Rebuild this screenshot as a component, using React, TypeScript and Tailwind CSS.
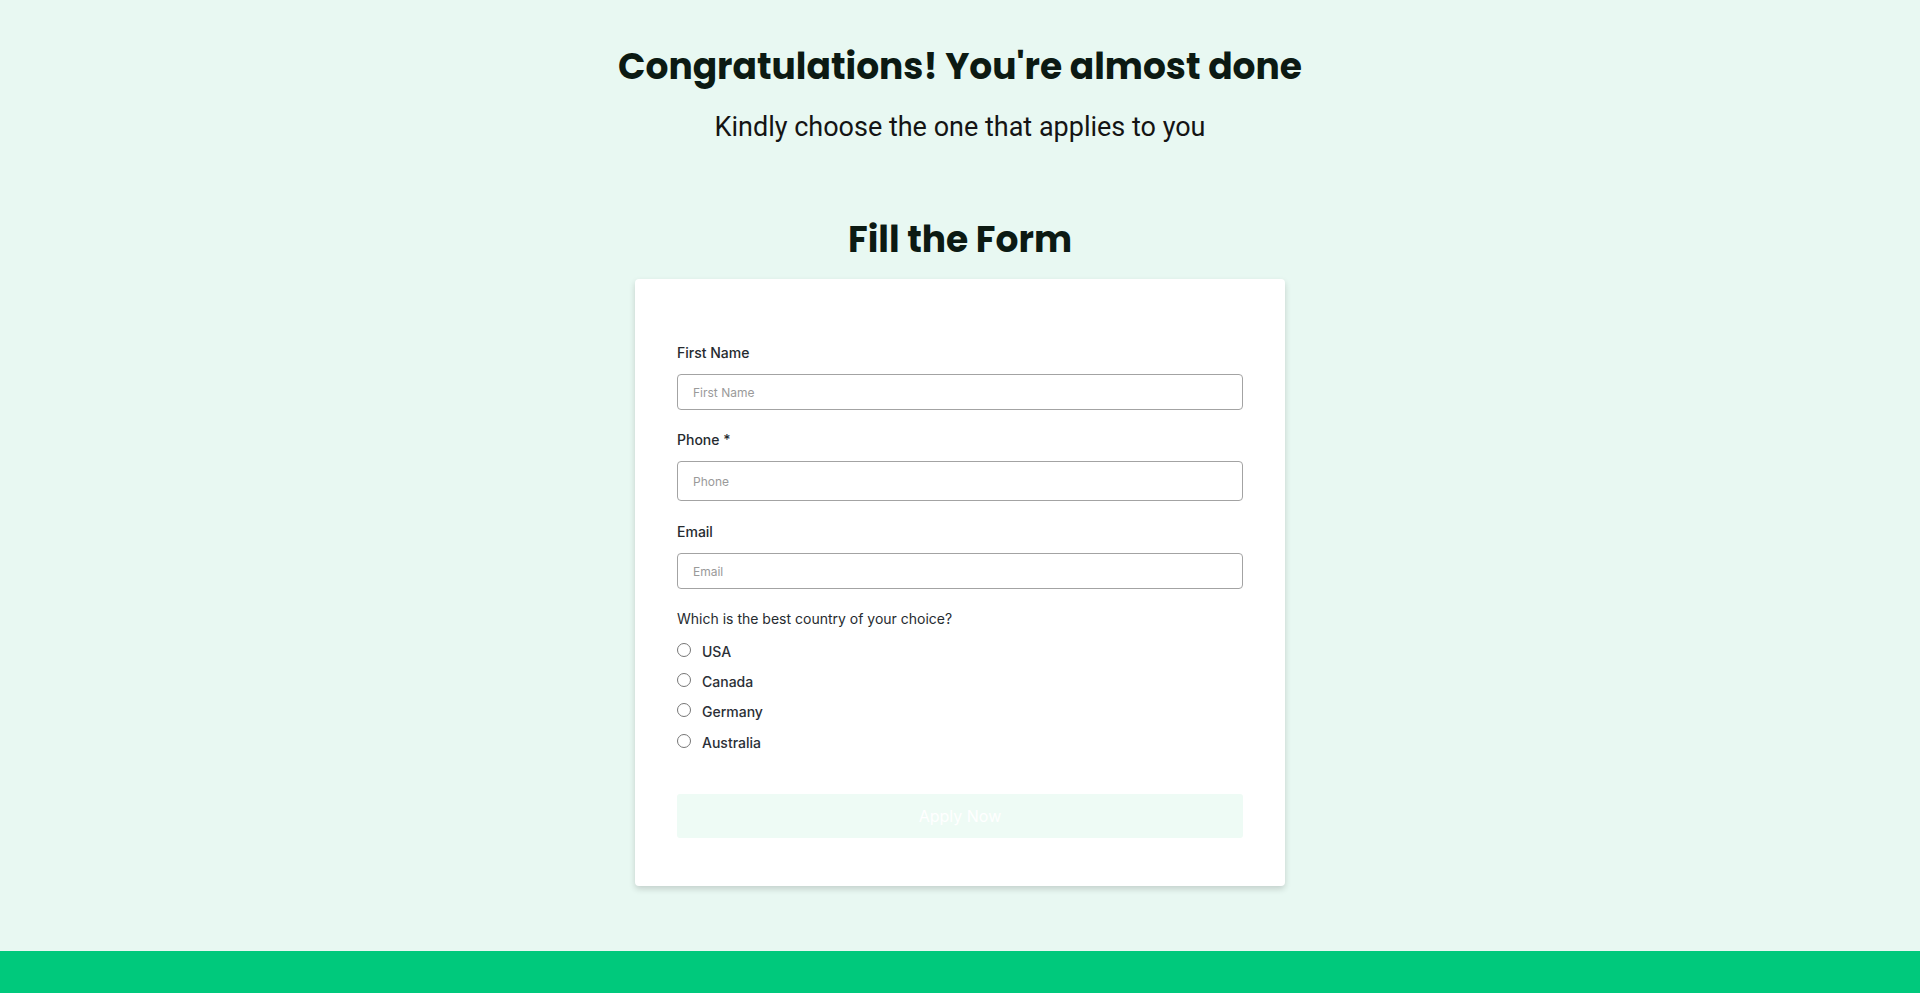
import { useState } from 'react'

const countries = ['USA', 'Canada', 'Germany', 'Australia']

function Field({ label, placeholder, tall }: { label: string; placeholder: string; tall?: boolean }) {
  return (
    <div className="flex flex-col">
      <label className="text-[14px] leading-[20px] font-medium text-[#262b2f]">{label}</label>
      <input
        placeholder={placeholder}
        className={`mt-[11px] w-full rounded-[4px] border border-[#a3a3a3] bg-white px-[15px] text-[12px] text-[#333] placeholder:text-[#9a9a9a] outline-none ${tall ? 'h-[40px]' : 'h-[36px]'}`}
      />
    </div>
  )
}

export default function App() {
  const [country, setCountry] = useState<string | null>(null)

  return (
    <div className="min-h-screen flex flex-col bg-[#e8f8f2] font-['Inter',sans-serif]">
      <main className="flex-1 flex flex-col items-center pt-[45px]">
        {/* Heading */}
        <h1 className="font-['Poppins','Open_Sans',sans-serif] font-bold text-[36px] leading-[44px] text-[#0c1a13]">
          Congratulations! You're almost done
        </h1>
        <p className="mt-[22px] font-['Roboto',sans-serif] text-[27px] leading-[32px] text-[#141414]">
          Kindly choose the one that applies to you
        </p>
        <h2 className="mt-[75px] font-['Poppins','Open_Sans',sans-serif] font-bold text-[36px] leading-[44px] text-[#0c1a13]">
          Fill the Form
        </h2>

        {/* Form card */}
        <form
          onSubmit={(e) => e.preventDefault()}
          className="mt-[17px] w-[650px] rounded-[4px] bg-white px-[42px] pt-[64px] pb-[48px] shadow-[0_3px_6px_rgba(0,0,0,0.16)]"
        >
          <div className="flex flex-col gap-[21px]">
            <Field label="First Name" placeholder="First Name" />
            <div className="-mt-[1px]">
              <Field label="Phone *" placeholder="Phone" tall />
            </div>
            <Field label="Email" placeholder="Email" />
          </div>

          <div className="mt-[20px]">
            <p className="text-[14px] leading-[20px] text-[#262b2f]">Which is the best country of your choice?</p>
            <div className="mt-[13px] flex flex-col gap-[10.2px]">
              {countries.map((c) => (
                <label key={c} className="flex items-start gap-[11px] h-[20px] cursor-pointer">
                  <input
                    type="radio"
                    name="country"
                    checked={country === c}
                    onChange={() => setCountry(c)}
                    className="mt-[1px] w-[14px] h-[14px] accent-[#00c97c]"
                  />
                  <span className="text-[14px] leading-[20px] font-medium text-[#2b2f36]">{c}</span>
                </label>
              ))}
            </div>
          </div>

          <button
            type="submit"
            className="mt-[41px] w-full h-[44px] rounded-[3px] bg-[#eefbf5] text-[16px] text-white"
          >
            Apply Now
          </button>
        </form>
      </main>

      <footer className="h-[42px] bg-[#00c97c]" />
    </div>
  )
}
